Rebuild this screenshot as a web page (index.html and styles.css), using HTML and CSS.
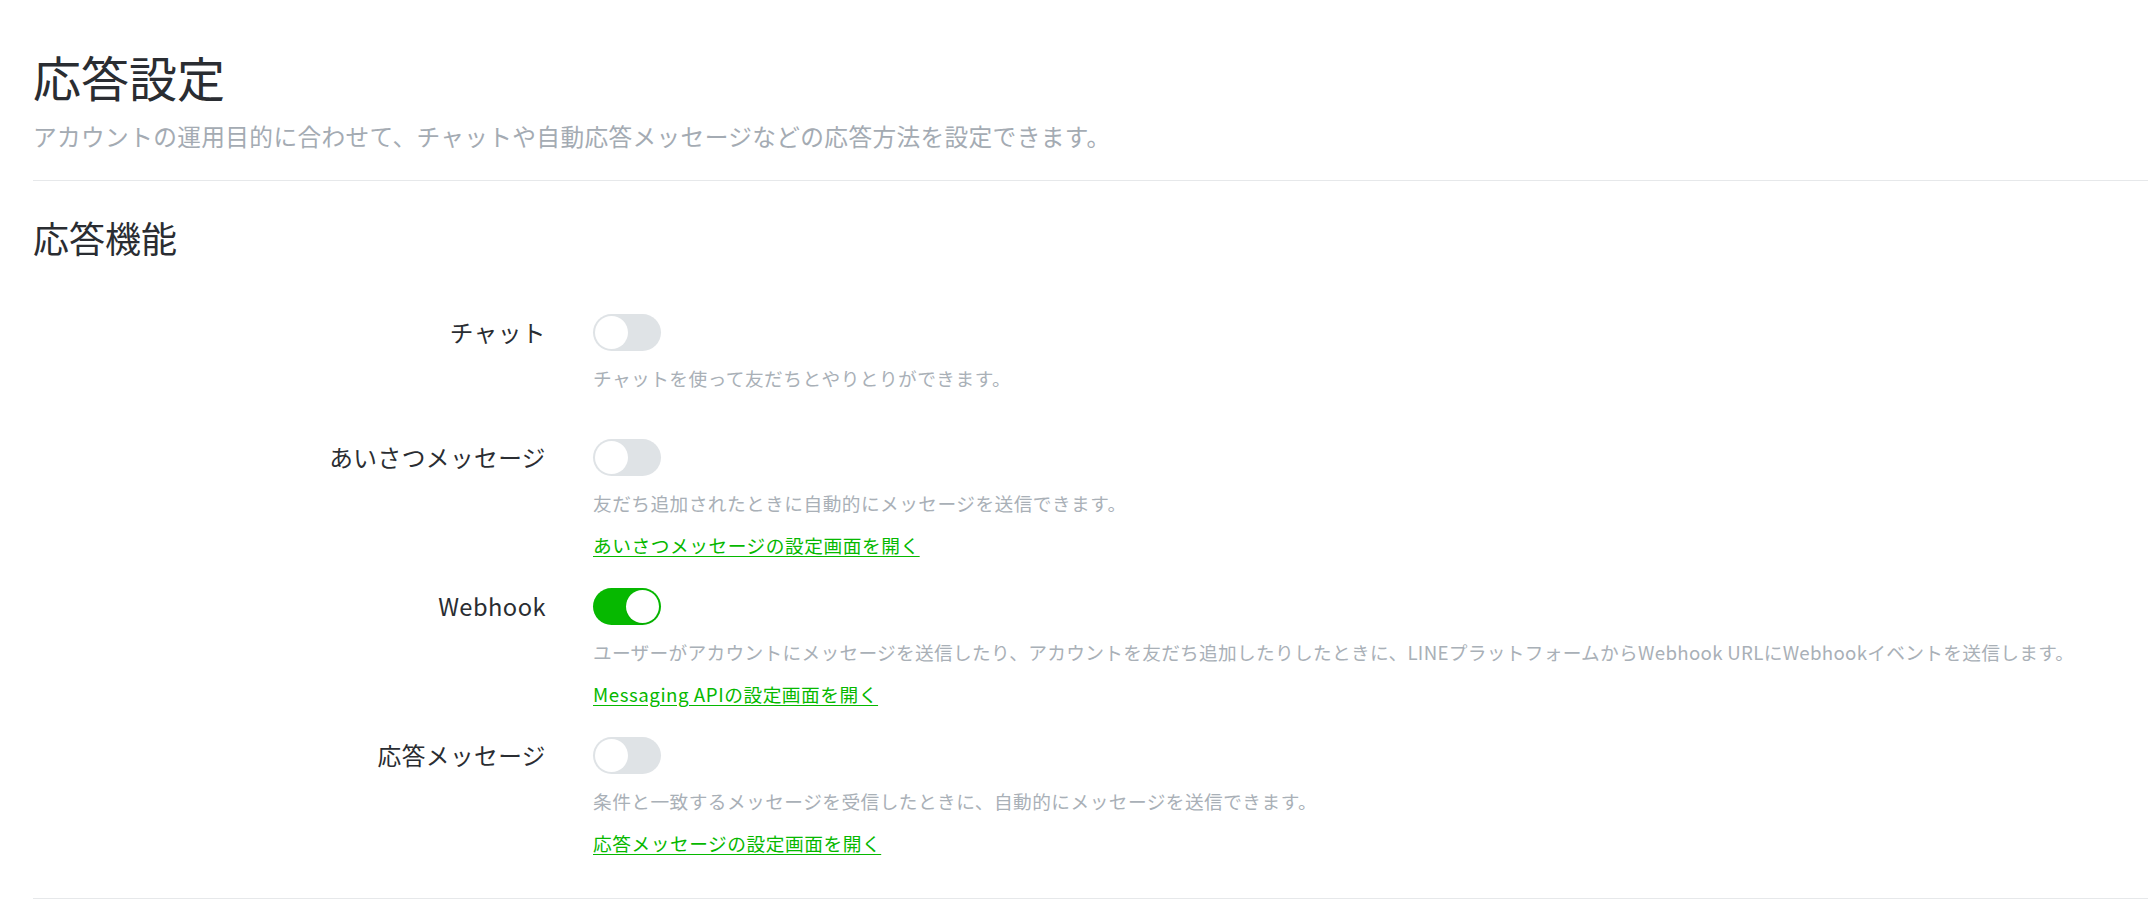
FILE: index.html
```html
<!DOCTYPE html>
<html lang="ja">
<head>
<meta charset="utf-8">
<title>応答設定</title>
<link rel="stylesheet" href="styles.css">
</head>
<body>
<main class="page">
  <header class="page-header">
    <h1 class="page-title">応答設定</h1>
    <p class="page-lead">アカウントの運用目的に合わせて、チャットや自動応答メッセージなどの応答方法を設定できます。</p>
  </header>

  <section class="section">
    <h2 class="section-title">応答機能</h2>

    <div class="setting-list">
      <div class="setting-row">
        <div class="setting-label">チャット</div>
        <div class="setting-body">
          <span class="toggle"><span class="knob"></span></span>
          <p class="setting-desc">チャットを使って友だちとやりとりができます。</p>
        </div>
      </div>

      <div class="setting-row">
        <div class="setting-label">あいさつメッセージ</div>
        <div class="setting-body">
          <span class="toggle"><span class="knob"></span></span>
          <p class="setting-desc">友だち追加されたときに自動的にメッセージを送信できます。</p>
          <a class="setting-link" href="#">あいさつメッセージの設定画面を開く</a>
        </div>
      </div>

      <div class="setting-row">
        <div class="setting-label">Webhook</div>
        <div class="setting-body">
          <span class="toggle is-on"><span class="knob"></span></span>
          <p class="setting-desc setting-desc-mixed">ユーザーがアカウントにメッセージを送信したり、アカウントを友だち追加したりしたときに、LINEプラットフォームからWebhook URLにWebhookイベントを送信します。</p>
          <a class="setting-link" href="#">Messaging APIの設定画面を開く</a>
        </div>
      </div>

      <div class="setting-row">
        <div class="setting-label">応答メッセージ</div>
        <div class="setting-body">
          <span class="toggle"><span class="knob"></span></span>
          <p class="setting-desc">条件と一致するメッセージを受信したときに、自動的にメッセージを送信できます。</p>
          <a class="setting-link" href="#">応答メッセージの設定画面を開く</a>
        </div>
      </div>
    </div>
  </section>
</main>
</body>
</html>
```

FILE: styles.css
```css
* { box-sizing: border-box; }

html, body {
  margin: 0;
  padding: 0;
  background: #ffffff;
}

body {
  font-family: "Noto Sans CJK JP", "Noto Sans", sans-serif;
  color: #2a2d32;
}

.page {
  padding-left: 33px;
}

.page-header {
  padding-top: 47px;
  padding-bottom: 26px;
  border-bottom: 1px solid #e6e8ea;
}

.page-title {
  margin: 0;
  font-size: 48px;
  line-height: 58px;
  font-weight: 400;
  color: #2a2d32;
}

.page-lead {
  margin: 13px 0 0;
  font-size: 23.7px;
  line-height: 36px;
  letter-spacing: 0.35px;
  color: #a4abb3;
}

.section {
  padding-top: 33px;
  padding-bottom: 43px;
  border-bottom: 1px solid #e6e8ea;
}

.section-title {
  margin: 0;
  font-size: 36px;
  line-height: 47px;
  font-weight: 400;
  color: #2a2d32;
}

.setting-list {
  display: flex;
  flex-direction: column;
  gap: 31px;
  margin-top: 53px;
}

.setting-row {
  display: grid;
  grid-template-columns: 513px 1fr;
  column-gap: 47px;
  align-items: start;
}

.setting-label {
  text-align: right;
  font-size: 23.7px;
  line-height: 36px;
  letter-spacing: 0.45px;
  color: #2a2d32;
}

.setting-body {
  display: flex;
  flex-direction: column;
  align-items: flex-start;
}

.toggle {
  display: flex;
  align-items: center;
  width: 68px;
  height: 37px;
  padding: 2px;
  border-radius: 19px;
  background: #dfe3e6;
}

.knob {
  width: 33px;
  height: 33px;
  border-radius: 50%;
  background: #ffffff;
}

.toggle.is-on {
  background: #06b800;
  justify-content: flex-end;
}

.toggle.is-on .knob {
  box-shadow: 0 2px 2px rgba(0, 0, 0, 0.06);
}

.setting-desc {
  margin: 13px 0 16px;
  height: 28px;
  font-size: 18.7px;
  line-height: 28px;
  letter-spacing: 0.45px;
  white-space: nowrap;
  color: #a9b0b7;
}

.setting-desc-mixed {
  letter-spacing: 0.3px;
}

.setting-link {
  display: block;
  height: 24px;
  font-size: 18.7px;
  line-height: 24px;
  letter-spacing: 0.55px;
  color: #06b800;
  text-decoration: underline;
  text-underline-offset: 3px;
}
```
